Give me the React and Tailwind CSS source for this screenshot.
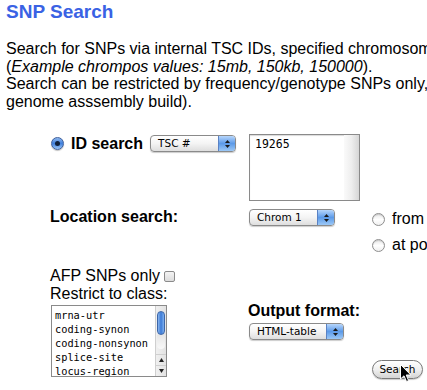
import React from "react";

// Aqua-style popup select
function AquaSelect({ label, width }) {
  return (
    <div
      className={`flex h-[17px] items-center rounded-[4px] border border-[#8a8a8a] bg-linear-to-b from-white via-[#f4f4f4] to-[#dedede] shadow-[0_1px_1px_rgba(0,0,0,0.2)] ${width}`}
    >
      <span className="flex-1 pl-[7px] font-['DejaVu_Sans',sans-serif] text-[10.5px] leading-none text-black">{label}</span>
      <span className="flex h-full w-[17px] flex-col items-center justify-center gap-[2px] rounded-r-[3px] border-l border-[#5a82c4] bg-linear-to-b from-[#b7d6fb] via-[#5c9ae8] to-[#9cc8f6]">
        <svg width="5" height="3" viewBox="0 0 5 3"><path d="M2.5 0 L5 3 L0 3 Z" fill="#1a1a1a" /></svg>
        <svg width="5" height="3" viewBox="0 0 5 3"><path d="M0 0 L5 0 L2.5 3 Z" fill="#1a1a1a" /></svg>
      </span>
    </div>
  );
}

function Radio({ checked }) {
  if (checked) {
    return (
      <span className="flex h-[13px] w-[13px] items-center justify-center rounded-full border border-[#3e5f9c] bg-linear-to-b from-[#8fb8ef] via-[#3f7fdc] to-[#9cc6f5] shadow-[0_1px_1px_rgba(0,0,0,0.25)]">
        <span className="h-[5px] w-[5px] rounded-full bg-[#10203a]" />
      </span>
    );
  }
  return (
    <span className="h-[13px] w-[13px] rounded-full border border-[#8e8e8e] bg-linear-to-b from-[#e8e8e8] via-white to-[#f0f0f0] shadow-[inset_0_1px_1px_rgba(0,0,0,0.15)]" />
  );
}

const classes = ["mrna-utr", "coding-synon", "coding-nonsynon", "splice-site", "locus-region"];

export default function App() {
  return (
    <div className="relative h-[390px] w-[427px] overflow-hidden bg-white font-['Liberation_Sans',Arial,sans-serif] text-black">
      {/* Title */}
      <h1 className="pl-[6px] pt-[1px] text-[19px] font-bold leading-[22px] text-[#3a62e4]">SNP Search</h1>

      {/* Intro (page is wider than the window, lines run off the right edge) */}
      <p className="mt-[17px] whitespace-nowrap pl-[6px] text-[16px] leading-[17.5px]">
        Search for SNPs via internal TSC IDs, specified chromosom
        <br />
        (<i>Example chrompos values: 15mb, 150kb, 150000</i>).
        <br />
        Search can be restricted by frequency/genotype SNPs only,
        <br />
        genome asssembly build).
      </p>

      {/* Form */}
      <div className="mt-[23px] grid grid-cols-[198px_124px_1fr] pl-[50px]">
        {/* Row 1: ID search */}
        <div className="h-[74px]">
          <div className="mt-[2px] flex h-[17px] items-center">
            <span className="ml-[1px]"><Radio checked /></span>
            <span className="ml-[7px] text-[16px] font-bold leading-[18px]">ID search</span>
            <span className="ml-[7px]"><AquaSelect label="TSC #" width="w-[86px]" /></span>
          </div>
        </div>
        <div className="h-[74px]">
          <div className="ml-[1px] mt-[1px] flex h-[67px] w-[111px] border border-[#8a8a8a] shadow-[inset_0_1px_1px_rgba(0,0,0,0.15)]">
            <span className="flex-1 pl-[5px] pt-[2px] font-['DejaVu_Sans_Mono',monospace] text-[11.5px] leading-[14px]">19265</span>
            <span className="w-[15px] bg-linear-to-r from-[#fafafa] via-[#eeeeee] to-[#d6d6d6]" />
          </div>
        </div>
        <div className="h-[74px]" />

        {/* Row 2: Location search */}
        <div className="h-[60px]">
          <div className="mt-[1px] text-[16px] font-bold leading-[18px]">Location search:</div>
        </div>
        <div className="h-[60px]">
          <div className="ml-[1px] mt-[2px]"><AquaSelect label="Chrom 1" width="w-[86px]" /></div>
        </div>
        <div className="h-[60px] whitespace-nowrap">
          <div className="mt-[3px] flex items-center gap-[7px]">
            <Radio />
            <span className="text-[16px] leading-[18px]">from</span>
          </div>
          <div className="mt-[8px] flex items-center gap-[7px]">
            <Radio />
            <span className="text-[16px] leading-[18px]">at po</span>
          </div>
        </div>

        {/* Row 3: class, output, submit */}
        <div>
          <div className="flex items-center text-[16px] leading-[17.5px]">
            AFP SNPs only
            <span className="ml-[4px] mt-[2px] h-[11px] w-[11px] rounded-[2px] border border-[#8a8a8a] bg-linear-to-b from-[#f4f4f4] to-[#dcdcdc]" />
          </div>
          <div className="text-[16px] leading-[17.5px]">Restrict to class:</div>
          <div className="ml-[1px] mt-[3px] flex h-[72px] w-[116px] border border-[#8a8a8a]">
            <div className="flex-1 pl-[3px] pt-[2px] font-['DejaVu_Sans_Mono',monospace] text-[10.3px] leading-[14px]">
              {classes.map((c) => (
                <div key={c}>{c}</div>
              ))}
            </div>
            <div className="flex w-[11px] flex-col border-l border-[#cfcfcf] bg-linear-to-r from-[#f0f0f0] to-[#e2e2e2]">
              <div className="mx-auto mt-[5px] h-[24px] w-[8px] rounded-full border border-[#3d66a8] bg-linear-to-r from-[#8ab6ee] via-[#3c7ad6] to-[#7fb1ef]" />
              <div className="mx-auto h-[14px] w-[8px] rounded-b-full bg-linear-to-b from-[#e6e6e6] to-[#f8f8f8]" />
              <div className="mt-auto flex h-[11px] items-center justify-center border-t border-[#cfcfcf]">
                <svg width="5" height="4" viewBox="0 0 5 4"><path d="M2.5 0 L5 4 L0 4 Z" fill="#222" /></svg>
              </div>
              <div className="flex h-[11px] items-center justify-center border-t border-[#cfcfcf]">
                <svg width="5" height="4" viewBox="0 0 5 4"><path d="M0 0 L5 0 L2.5 4 Z" fill="#222" /></svg>
              </div>
            </div>
          </div>
        </div>
        <div>
          <div className="mt-[35px] text-[16px] font-bold leading-[18px]">Output format:</div>
          <div className="ml-[1px] mt-[3px]"><AquaSelect label="HTML-table" width="w-[95px]" /></div>
        </div>
        <div>
          <button className="mt-[93px] flex h-[19px] w-[51px] items-center justify-center rounded-full border border-[#7a7a7a] bg-linear-to-b from-white via-[#f0f0f0] to-[#d4d4d4] font-['DejaVu_Sans',sans-serif] text-[10.5px] leading-none shadow-[0_1px_1px_rgba(0,0,0,0.2)]">
            Search
          </button>
        </div>
      </div>

      {/* Mouse pointer over the button */}
      <svg className="absolute left-[400px] top-[364px]" width="12" height="19" viewBox="0 0 12 19">
        <path d="M0.5 0.5 L0.5 15 L4 11.8 L6.5 17.5 L8.6 16.6 L6.2 11 L10.8 11 Z" fill="#000" stroke="#fff" strokeWidth="1" />
      </svg>
    </div>
  );
}
